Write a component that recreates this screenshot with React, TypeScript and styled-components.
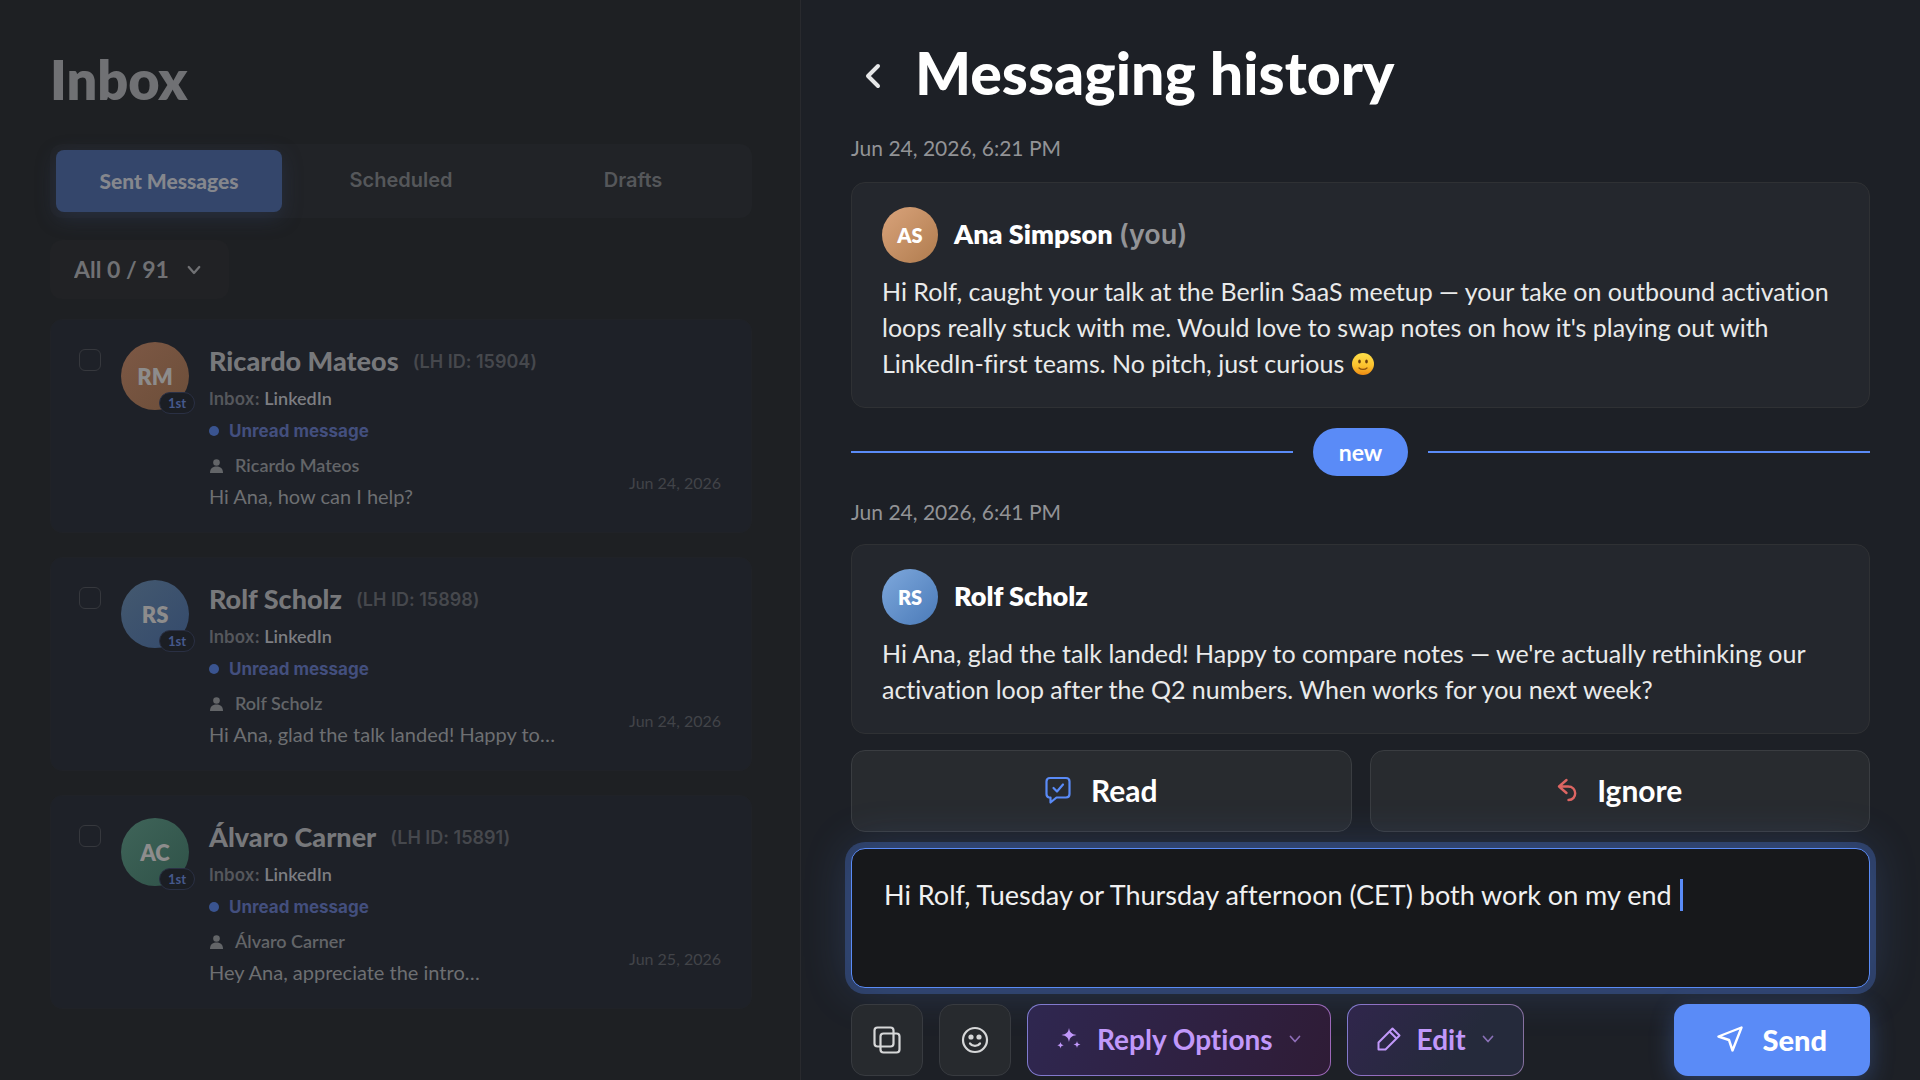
import React, { useLayoutEffect, useRef, useState } from "react";
import styled, { createGlobalStyle } from "styled-components";

const sans = `Lato, "Open Sans", sans-serif`;
const ui = `Inter, "Liberation Sans", sans-serif`;
const accent = "#5a8bf7";
const caretWidth = 3;

const GlobalStyle = createGlobalStyle`
  *, *::before, *::after { box-sizing: border-box; }
  body {
    margin: 0;
    background: #1d2026;
    font-family: ${sans};
    font-variant-ligatures: none;
    color: #fff;
  }
  button, select, textarea, input {
    font: inherit;
    font-variant-ligatures: none;
    color: inherit;
    margin: 0;
  }
  h1, h2, h3, p { margin: 0; }
`;

const Page = styled.div`
  display: grid;
  grid-template-columns: 5fr 7fr;
  min-height: 100vh;
  overflow: hidden;
`;

const InboxPanel = styled.aside`
  padding: 48px 48px 48px 50px;
  background: #1e2023;
`;

const InboxTitle = styled.h1`
  font-size: 54px;
  line-height: 64px;
  font-weight: 800;
  color: #707174;
`;

const Tabs = styled.div`
  display: grid;
  grid-template-columns: repeat(3, 1fr);
  gap: 6px;
  margin-top: 32px;
  padding: 6px;
  border-radius: 12px;
  background: #212327;
`;

const Tab = styled.button<{ $active?: boolean }>`
  height: 62px;
  padding: 0 0 2px;
  border: 0;
  border-radius: 8px;
  cursor: pointer;
  font-family: ${(p) => (p.$active ? sans : ui)};
  font-size: ${(p) => (p.$active ? 21 : 20)}px;
  font-weight: ${(p) => (p.$active ? 900 : 600)};
  color: ${(p) => (p.$active ? "#85878d" : "#55575a")};
  background: ${(p) => (p.$active ? "#34466b" : "transparent")};
  box-shadow: ${(p) => (p.$active ? "0 6px 20px rgba(52, 70, 107, 0.35)" : "none")};
`;

const Filter = styled.label`
  display: inline-grid;
  align-items: center;
  margin-top: 22px;
  border-radius: 12px;
  background: #212225;
  color: #707174;

  > * { grid-area: 1 / 1; }
  > svg { justify-self: end; margin-right: 28px; pointer-events: none; }
`;

const FilterSelect = styled.select`
  height: 59px;
  padding: 0 60px 2px 24px;
  border: 0;
  appearance: none;
  background: transparent;
  font-size: 23px;
  font-weight: 700;
`;

const ThreadList = styled.ul`
  display: grid;
  gap: 24px;
  margin: 20px 0 0;
  padding: 0;
  list-style: none;
`;

const Thread = styled.li`
  display: grid;
  grid-template-columns: auto auto 1fr auto;
  padding: 22px 30px 23px 28px;
  border: 1px solid #202227;
  border-radius: 12px;
  background: #1e2128;
`;

const Check = styled.input`
  appearance: none;
  width: 22px;
  height: 22px;
  margin: 7px 20px 0 0;
  border: 1px solid #36383d;
  border-radius: 6px;
`;

const ThreadAvatar = styled.div<{ $from: string; $to: string }>`
  position: relative;
  display: grid;
  place-items: center;
  width: 68px;
  height: 68px;
  margin-right: 20px;
  border-radius: 50%;
  background: linear-gradient(135deg, ${(p) => p.$from}, ${(p) => p.$to});
  color: #8d8c8c;
  font-size: 22px;
  font-weight: 800;
`;

const Degree = styled.span`
  position: absolute;
  right: -6px;
  bottom: -4px;
  width: 36px;
  height: 22px;
  border: 1px solid #2a3044;
  border-radius: 11px;
  background: #1b1e24;
  color: #46598c;
  font-size: 13px;
  line-height: 20px;
  font-weight: 700;
  text-align: center;
`;

const ThreadBody = styled.div`
  min-width: 0;
`;

const ThreadHead = styled.div`
  display: flex;
  align-items: center;
  gap: 14px;
  height: 38px;
`;

const ThreadName = styled.h2`
  font-size: 27px;
  line-height: 38px;
  font-weight: 900;
  color: #77787b;
`;

const ThreadId = styled.span`
  font-family: ${ui};
  font-size: 18px;
  font-weight: 600;
  color: #46484d;
`;

const Source = styled.p`
  font-size: 18px;
  line-height: 36px;
  font-weight: 600;
  color: #7d7e82;

  span { font-family: ${ui}; font-size: 17px; color: #55575c; }
`;

const Unread = styled.p`
  display: flex;
  align-items: center;
  gap: 10px;
  font-family: ${ui};
  font-size: 17px;
  line-height: 28px;
  font-weight: 700;
  color: #434f7e;

  &::before {
    content: "";
    width: 10px;
    height: 10px;
    border-radius: 50%;
    background: #3a5490;
  }
`;

const Person = styled.p`
  display: flex;
  align-items: center;
  gap: 11px;
  margin-top: 2px;
  font-size: 18px;
  line-height: 36px;
  font-weight: 600;
  color: #636568;
`;

const Preview = styled.p`
  font-size: 20px;
  line-height: 26px;
  color: #6d6f72;
`;

const ThreadDate = styled.time`
  align-self: end;
  margin-bottom: 14px;
  font-size: 16px;
  line-height: 24px;
  color: #424449;
`;

const HistoryPanel = styled.main`
  display: flex;
  flex-direction: column;
  padding: 40px 50px 0;
  border-left: 1px solid #292a2e;
  background: #1d2026;
`;

const HistoryHead = styled.header`
  display: flex;
  gap: 20px;
`;

const BackButton = styled.button`
  display: grid;
  place-items: center;
  width: 44px;
  height: 72px;
  padding: 0;
  border: 0;
  background: transparent;
  color: #e6e7e8;
`;

const HistoryTitle = styled.h1`
  font-size: 59px;
  line-height: 66px;
  font-weight: 900;
`;

const Stamp = styled.time`
  margin: 20px 0 16px;
  font-size: 21px;
  line-height: 32px;
  color: #929396;

  ${HistoryHead} + & { margin-bottom: 18px; }
`;

const Message = styled.article`
  padding: 24px 30px 26px;
  border: 1px solid #2f3134;
  border-radius: 14px;
  background: #24272d;
`;

const Author = styled.div`
  display: flex;
  align-items: center;
  gap: 16px;
  margin-bottom: 10px;
`;

const Avatar = styled.div<{ $from: string; $to: string }>`
  display: grid;
  place-items: center;
  width: 56px;
  height: 56px;
  border-radius: 50%;
  background: linear-gradient(135deg, ${(p) => p.$from}, ${(p) => p.$to});
  font-size: 20px;
  font-weight: 800;
`;

const AuthorName = styled.h3`
  padding-bottom: 2px;
  font-size: 27px;
  line-height: 36px;
  font-weight: 800;

  span { font-family: ${ui}; font-weight: 600; color: #939497; }
`;

const MessageText = styled.p`
  font-size: 25px;
  line-height: 36px;
  color: #e9eaea;

  svg { vertical-align: -3px; }
`;

const Divider = styled.div`
  display: flex;
  align-items: center;
  gap: 20px;
  margin-top: 20px;

  &::before, &::after {
    content: "";
    flex: 1;
    height: 2px;
    background: ${accent};
  }
`;

const NewPill = styled.span`
  padding: 0 26px;
  border-radius: 24px;
  background: ${accent};
  font-size: 23px;
  line-height: 48px;
  font-weight: 700;
`;

const Choices = styled.div`
  display: grid;
  grid-template-columns: 1fr 1fr;
  gap: 18px;
  margin-top: 16px;
`;

const ChoiceButton = styled.button`
  display: flex;
  align-items: center;
  justify-content: center;
  gap: 20px;
  height: 82px;
  padding: 0 0 2px;
  border: 1px solid #3a3d41;
  border-radius: 14px;
  background: #282b2f;
  font-size: 30px;
  font-weight: 700;
`;

const Composer = styled.div`
  position: relative;
  display: grid;
  margin: 16px 0;
`;

const ReplyBox = styled.textarea`
  height: 140px;
  padding: 28px 32px;
  border: 1px solid ${accent};
  border-radius: 14px;
  outline: 0;
  resize: none;
  caret-color: transparent;
  background: #17181b;
  box-shadow: 0 0 0 6px rgba(74, 116, 214, 0.34), 0 0 48px rgba(90, 139, 247, 0.22);
  font-size: 27px;
  line-height: 36px;
  color: #f0f0f1;
`;

const Caret = styled.span`
  position: absolute;
  top: 31px;
  width: ${caretWidth}px;
  height: 32px;
  background: ${accent};
`;

const Toolbar = styled.div`
  position: relative;
  display: flex;
  gap: 16px;
`;

const ToolButton = styled.button`
  display: flex;
  align-items: center;
  justify-content: center;
  width: 72px;
  height: 72px;
  padding: 0;
  border: 1px solid #383b40;
  border-radius: 14px;
  background: #272a2e;
  color: #d6d7d8;
`;

const AiButton = styled(ToolButton)<{ $strong?: boolean }>`
  gap: 16px;
  width: auto;
  padding: 0 29px 2px;
  border: 1px solid transparent;
  background:
    ${(p) =>
      p.$strong
        ? "linear-gradient(110deg, #2f2750, #2f1c36)"
        : "linear-gradient(125deg, #30264c, #252a3b 65%)"} padding-box,
    linear-gradient(100deg, #7f7cd0, #9d67b8 ${(p) => (p.$strong ? "100%" : "30%")}, #85729f) border-box;
  color: #c198fa;
  font-size: 28px;
  font-weight: 700;
`;

const SendButton = styled(ToolButton)`
  gap: 20px;
  width: auto;
  margin-left: auto;
  padding: 0 43px 2px;
  border: 0;
  background: ${accent};
  box-shadow: 0 6px 24px rgba(90, 139, 247, 0.3);
  color: #fff;
  font-size: 29px;
  font-weight: 900;
`;

const Chevron = ({ size, weight, dim }: { size: number; weight: number; dim?: boolean }) => (
  <svg width={size} height={size} viewBox="0 0 12 12" fill="none" stroke="currentColor" strokeWidth={weight} strokeLinecap="round" strokeLinejoin="round" opacity={dim ? 0.65 : 1} aria-hidden="true">
    <path d="M1.500 3.500 6 8.500 10.500 3.500" />
  </svg>
);

const PersonIcon = () => (
  <svg width="15" height="16" viewBox="0 0 15 16" fill="currentColor" aria-hidden="true">
    <circle cx="7.5" cy="5.500" r="3.300" />
    <path d="M1 16c0-4.200 2.200-6.400 6.500-6.400s6.500 2.200 6.500 6.400z" />
  </svg>
);

const SmileEmoji = () => (
  <svg width="24" height="24" viewBox="0 0 24 24" role="img" aria-label="🙂">
    <defs>
      <linearGradient id="face" x1="0" y1="0" x2="0" y2="1">
        <stop offset="0" stopColor="#ffe04a" />
        <stop offset="0.6" stopColor="#fbc02d" />
        <stop offset="1" stopColor="#ee8a12" />
      </linearGradient>
    </defs>
    <circle cx="12" cy="12" r="11" fill="url(#face)" />
    <ellipse cx="8.500" cy="9.500" rx="1.300" ry="1.900" fill="#6b3d0c" />
    <ellipse cx="15.500" cy="9.500" rx="1.300" ry="1.900" fill="#6b3d0c" />
    <path d="M8 16c2 1.800 6 1.800 8 0" fill="none" stroke="#8a520f" strokeWidth="1.200" strokeLinecap="round" />
  </svg>
);

const threads = [
  { initials: "RM", name: "Ricardo Mateos", id: "15904", text: "Hi Ana, how can I help?", date: "Jun 24, 2026", from: "#7d5845", to: "#6c4e39" },
  { initials: "RS", name: "Rolf Scholz", id: "15898", text: "Hi Ana, glad the talk landed! Happy to…", date: "Jun 24, 2026", from: "#44596f", to: "#344a6c" },
  { initials: "AC", name: "Álvaro Carner", id: "15891", text: "Hey Ana, appreciate the intro…", date: "Jun 25, 2026", from: "#3f6459", to: "#2f5248" },
];

const draft = "Hi Rolf, Tuesday or Thursday afternoon (CET) both work on my end ";

function ReplyComposer() {
  const box = useRef<HTMLTextAreaElement>(null);
  const [text, setText] = useState(draft);
  const [caretX, setCaretX] = useState(0);

  useLayoutEffect(() => {
    const el = box.current;
    const ctx = document.createElement("canvas").getContext("2d");
    if (!el || !ctx) return;
    const style = getComputedStyle(el);
    ctx.font = `${style.fontWeight} ${style.fontSize} ${style.fontFamily}`;
    const inset = parseInt(style.paddingLeft, 10) + parseInt(style.borderLeftWidth, 10);
    setCaretX(Math.round(inset + ctx.measureText(text).width - caretWidth));
  }, [text]);

  return (
    <Composer>
      <ReplyBox ref={box} aria-label="Reply" value={text} onChange={(e) => setText(e.target.value)} />
      <Caret style={{ left: caretX }} />
    </Composer>
  );
}

export default function App() {
  return (
    <>
      <GlobalStyle />
      <Page>
        <InboxPanel>
          <InboxTitle>Inbox</InboxTitle>
          <Tabs role="tablist">
            <Tab role="tab" aria-selected="true" $active>Sent Messages</Tab>
            <Tab role="tab" aria-selected="false">Scheduled</Tab>
            <Tab role="tab" aria-selected="false">Drafts</Tab>
          </Tabs>
          <Filter>
            <FilterSelect aria-label="Filter messages">
              <option>All 0 / 91</option>
            </FilterSelect>
            <Chevron size={14} weight={2} />
          </Filter>
          <ThreadList>
            {threads.map((t) => (
              <Thread key={t.id}>
                <Check type="checkbox" aria-label={`Select ${t.name}`} />
                <ThreadAvatar $from={t.from} $to={t.to}>
                  {t.initials}
                  <Degree>1st</Degree>
                </ThreadAvatar>
                <ThreadBody>
                  <ThreadHead>
                    <ThreadName>{t.name}</ThreadName>
                    <ThreadId>(LH ID: {t.id})</ThreadId>
                  </ThreadHead>
                  <Source><span>Inbox:</span> LinkedIn</Source>
                  <Unread>Unread message</Unread>
                  <Person><PersonIcon />{t.name}</Person>
                  <Preview>{t.text}</Preview>
                </ThreadBody>
                <ThreadDate>{t.date}</ThreadDate>
              </Thread>
            ))}
          </ThreadList>
        </InboxPanel>

        <HistoryPanel>
          <HistoryHead>
            <BackButton aria-label="Back">
              <svg width="18" height="28" viewBox="0 0 18 28" fill="none" stroke="currentColor" strokeWidth="4" strokeLinecap="round" strokeLinejoin="round">
                <path d="M14 4 4 14 14 24" />
              </svg>
            </BackButton>
            <HistoryTitle>Messaging history</HistoryTitle>
          </HistoryHead>

          <Stamp>Jun 24, 2026, 6:21 PM</Stamp>
          <Message>
            <Author>
              <Avatar $from="#d9a37b" $to="#b07c4e">AS</Avatar>
              <AuthorName>Ana Simpson <span>(you)</span></AuthorName>
            </Author>
            <MessageText>
              Hi Rolf, caught your talk at the Berlin SaaS meetup — your take on outbound activation
              loops really stuck with me. Would love to swap notes on how it's playing out with
              LinkedIn-first teams. No pitch, just curious <SmileEmoji />
            </MessageText>
          </Message>

          <Divider><NewPill>new</NewPill></Divider>

          <Stamp>Jun 24, 2026, 6:41 PM</Stamp>
          <Message>
            <Author>
              <Avatar $from="#7ea8dc" $to="#4a7ab8">RS</Avatar>
              <AuthorName>Rolf Scholz</AuthorName>
            </Author>
            <MessageText>
              Hi Ana, glad the talk landed! Happy to compare notes — we're actually rethinking our
              activation loop after the Q2 numbers. When works for you next week?
            </MessageText>
          </Message>

          <Choices>
            <ChoiceButton>
              <svg width="26" height="28" viewBox="0 0 26 28" fill="none" stroke={accent} strokeWidth="2.200" strokeLinecap="round" strokeLinejoin="round" aria-hidden="true">
                <path d="M4 21.500C2.300 21 1.500 20 1.500 18V5.500c0-2.500 1.300-3.500 3.500-3.500h16c2.200 0 3.500 1 3.500 3.500V18c0 2.500-1.300 3.500-3.500 3.500H11.500L5.500 26.500V21.500z" />
                <path d="M8.500 12 12 15.500 18 8.500" />
              </svg>
              Read
            </ChoiceButton>
            <ChoiceButton>
              <svg width="20" height="24" viewBox="0 0 20 24" fill="none" stroke="#dd6562" strokeWidth="2.400" strokeLinecap="round" strokeLinejoin="round" aria-hidden="true">
                <path d="M9.500 2 2 8.500 9.500 15M2 8.500h9c9.500 0 9.500 13.500.500 13.500" />
              </svg>
              Ignore
            </ChoiceButton>
          </Choices>

          <ReplyComposer />

          <Toolbar>
            <ToolButton aria-label="Templates">
              <svg width="28" height="28" viewBox="0 0 28 28" fill="none" stroke="currentColor" strokeWidth="2.200" aria-hidden="true">
                <rect x="1.500" y="1.500" width="19" height="19" rx="3" />
                <rect x="7.500" y="7.500" width="19" height="19" rx="3" />
              </svg>
            </ToolButton>
            <ToolButton aria-label="Emoji">
              <svg width="28" height="28" viewBox="0 0 28 28" fill="none" stroke="currentColor" strokeWidth="2.200" strokeLinecap="round" aria-hidden="true">
                <circle cx="14" cy="14" r="12" />
                <circle cx="10" cy="11" r="2.600" fill="currentColor" stroke="none" />
                <circle cx="18" cy="11" r="2.600" fill="currentColor" stroke="none" />
                <path d="M9 17.500c2.400 3.300 7.600 3.300 10 0" />
              </svg>
            </ToolButton>
            <AiButton $strong aria-haspopup="menu">
              <svg width="24" height="24" viewBox="0 0 24 24" fill="currentColor" aria-hidden="true">
                <path d="M12 1c.9 4.600 2.300 6 7.500 7-5.200 1-6.600 2.400-7.500 7-.9-4.600-2.300-6-7.500-7 5.200-1 6.600-2.400 7.500-7z" />
                <path d="M3.500 15c.500 2.200 1 2.700 3.200 3.200-2.200.500-2.700 1-3.200 3.200-.500-2.200-1-2.700-3.200-3.200 2.200-.500 2.700-1 3.200-3.200z" />
                <path d="M20 14c.500 2.500 1 3 3.500 3.500-2.500.500-3 1-3.500 3.500-.500-2.500-1-3-3.500-3.500 2.500-.500 3-1 3.500-3.500z" />
              </svg>
              Reply Options
              <Chevron size={12} weight={1.7} dim />
            </AiButton>
            <AiButton aria-haspopup="menu">
              <svg width="24" height="24" viewBox="0 0 24 24" fill="none" stroke="currentColor" strokeWidth="2" strokeLinejoin="round" aria-hidden="true">
                <path d="M1.500 22.500v-7L15.500 1.500l7 7L8.500 22.500zM12.500 4.500l7 7" />
              </svg>
              Edit
              <Chevron size={12} weight={1.7} dim />
            </AiButton>
            <SendButton>
              <svg width="26" height="26" viewBox="0 0 26 26" fill="none" stroke="currentColor" strokeWidth="2.400" strokeLinejoin="round" aria-hidden="true">
                <path d="M24.500 1.500 15.500 24.500 12 14 1.500 10.500z" />
              </svg>
              Send
            </SendButton>
          </Toolbar>
        </HistoryPanel>
      </Page>
    </>
  );
}
